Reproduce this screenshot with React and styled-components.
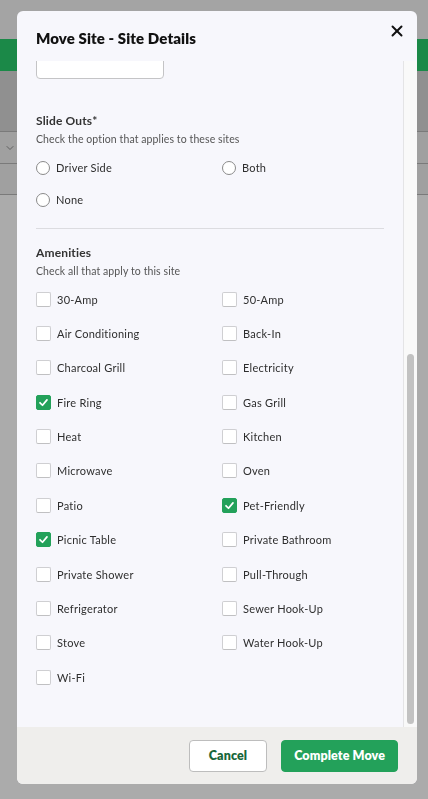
import React, { useLayoutEffect, useRef, useState } from 'react';
import styled, { createGlobalStyle } from 'styled-components';
import { X, ChevronDown } from 'lucide-react';

const GlobalStyle = createGlobalStyle`
  html, body {
    margin: 0;
    padding: 0;
    height: 100%;
    overflow: hidden;
  }
  body {
    font-family: Lato, "Noto Sans", Arial, sans-serif;
    background: #ffffff;
  }
`;

// page behind the modal
const Page = styled.div`
  min-height: 799px;
  background: #fdfdfd;
`;

const TopBar = styled.div`
  height: 39px;
  background: #f2f2f2;
`;

const NavBar = styled.div`
  height: 32px;
  background: #29cb6b;
`;

const Toolbar = styled.div`
  height: 60px;
  background: #d4d4d4;
`;

const TableRow = styled.div`
  height: 32px;
  display: flex;
  align-items: center;
  padding-left: 4px;
  background: #ececec;
  border-top: 1px solid #b4b4b4;
  box-sizing: border-box;
  color: #6e6e6e;

  &:last-child {
    border-bottom: 1px solid #b4b4b4;
  }
`;

const Overlay = styled.div`
  position: fixed;
  inset: 0;
  background: rgba(0, 0, 0, 0.32);
`;

const Modal = styled.div`
  position: fixed;
  top: 11px;
  left: 17px;
  width: 400px;
  height: 773px;
  display: flex;
  flex-direction: column;
  background: #f7f7fc;
  border-radius: 6px;
  overflow: hidden;
`;

const Header = styled.div`
  height: 50px;
  flex-shrink: 0;
  display: flex;
  align-items: center;
  justify-content: space-between;
  padding: 4px 11px 0 19px;
  box-sizing: border-box;
`;

const Title = styled.h2`
  margin: 0;
  font-size: 15px;
  font-weight: 800;
  color: #111;
  letter-spacing: 0.1px;
`;

const CloseButton = styled.button`
  border: none;
  background: none;
  padding: 0;
  margin-top: -15px;
  display: flex;
  color: #111;
  cursor: pointer;
`;

const ScrollArea = styled.div`
  flex: 1;
  min-height: 0;
  display: flex;
`;

const Body = styled.div`
  flex: 1;
  overflow-y: scroll;
  scrollbar-width: none;
  padding: 24px 19px 43px 19px;

  &::-webkit-scrollbar {
    display: none;
  }
`;

const Track = styled.div`
  width: 14px;
  flex-shrink: 0;
  display: flex;
  justify-content: center;
  background: #f9f9f9;
  border-left: 1px solid #e4e4e6;
  padding: 3px 0;
  box-sizing: border-box;
`;

const Thumb = styled.div`
  width: 7px;
  border-radius: 4px;
  background: #c2c2c2;
`;

const Field = styled.div`
  display: flex;
  flex-direction: column;
  gap: 6px;
  margin-bottom: 22px;
`;

const FieldLabel = styled.label`
  font-size: 12px;
  font-weight: 700;
  color: #333;
  letter-spacing: 0.2px;
`;

const TextInput = styled.input`
  width: ${(p) => p.$width || '100%'};
  height: 34px;
  box-sizing: border-box;
  border: 1px solid #c4c4c6;
  border-radius: 4px;
  background: #fff;
  padding: 0 10px;
  font-family: inherit;
  font-size: 12px;
`;

const Section = styled.div`
  margin-top: ${(p) => p.$top || 0}px;
`;

const SectionTitle = styled.div`
  font-size: 12px;
  line-height: 16px;
  font-weight: 700;
  color: #333;
  letter-spacing: 0.15px;
`;

const Help = styled.div`
  margin-top: 3px;
  font-size: 10.5px;
  line-height: 14px;
  color: #555;
  letter-spacing: 0.1px;
`;

const OptionGrid = styled.div`
  display: grid;
  grid-template-columns: 1fr 1fr;
  column-gap: 24px;
  row-gap: ${(p) => p.$gap}px;
  margin-top: 14.5px;
`;

const Option = styled.label`
  display: flex;
  align-items: center;
  gap: 6px;
  height: 14px;
  font-size: 11px;
  color: #2e2e2e;
  letter-spacing: 0.25px;
  white-space: nowrap;
`;

const Radio = styled.span`
  width: 12px;
  height: 12px;
  border: 1px solid #8a8a8a;
  border-radius: 50%;
  background: #fff;
  flex-shrink: 0;
`;

const Box = styled.span`
  width: 13px;
  height: 13px;
  border: 1px solid ${(p) => (p.$checked ? '#23a15a' : '#cfcfd2')};
  border-bottom-color: ${(p) => (p.$checked ? '#23a15a' : '#c0c0c2')};
  border-radius: 2px;
  background: ${(p) => (p.$checked ? '#23a15a' : '#fff')};
  display: flex;
  align-items: center;
  justify-content: center;
  flex-shrink: 0;
`;

const Divider = styled.hr`
  border: none;
  border-top: 1px solid #dcdce0;
  margin: 21px 0 0;
`;

const Footer = styled.div`
  height: 57px;
  flex-shrink: 0;
  display: flex;
  align-items: center;
  justify-content: flex-end;
  gap: 14px;
  padding: 0 19px 0 0;
  background: #efeeec;
`;

const Button = styled.button`
  height: 32px;
  padding: 0 ${(p) => (p.$primary ? 12 : 19)}px;
  border-radius: 4px;
  font-family: inherit;
  font-size: 12.5px;
  font-weight: 800;
  letter-spacing: 0.1px;
  cursor: pointer;
  border: 1px solid ${(p) => (p.$primary ? '#23a15a' : '#bdbdbd')};
  background: ${(p) => (p.$primary ? '#23a15a' : '#fff')};
  color: ${(p) => (p.$primary ? '#fff' : '#17663a')};
`;

const Check = () => (
  <svg width="11" height="11" viewBox="0 0 12 12" fill="none">
    <polyline points="2.2,6.3 4.9,9 9.8,3.2" stroke="#fff" strokeWidth="1.9" strokeLinecap="round" strokeLinejoin="round" />
  </svg>
);

const amenities = [
  ['30-Amp', false], ['50-Amp', false],
  ['Air Conditioning', false], ['Back-In', false],
  ['Charcoal Grill', false], ['Electricity', false],
  ['Fire Ring', true], ['Gas Grill', false],
  ['Heat', false], ['Kitchen', false],
  ['Microwave', false], ['Oven', false],
  ['Patio', false], ['Pet-Friendly', true],
  ['Picnic Table', true], ['Private Bathroom', false],
  ['Private Shower', false], ['Pull-Through', false],
  ['Refrigerator', false], ['Sewer Hook-Up', false],
  ['Stove', false], ['Water Hook-Up', false],
  ['Wi-Fi', false],
];

export default function App() {
  const bodyRef = useRef(null);
  const [thumb, setThumb] = useState({ top: 0, height: 0 });

  useLayoutEffect(() => {
    const el = bodyRef.current;
    if (!el) return;
    // the reference is scrolled to the end of the form
    el.scrollTop = el.scrollHeight;
    const trackH = el.clientHeight - 6;
    setThumb({
      top: (el.scrollTop / el.scrollHeight) * trackH,
      height: (el.clientHeight / el.scrollHeight) * trackH,
    });
  }, []);

  return (
    <>
      <GlobalStyle />
      <Page>
        <TopBar />
        <NavBar />
        <Toolbar />
        <TableRow><ChevronDown size={12} strokeWidth={1.5} /></TableRow>
        <TableRow />
      </Page>
      <Overlay />
      <Modal>
        <Header>
          <Title>Move Site - Site Details</Title>
          <CloseButton aria-label="Close"><X size={18} strokeWidth={2.6} /></CloseButton>
        </Header>
        <ScrollArea>
          <Body ref={bodyRef}>
            <Field>
              <FieldLabel>Site Name*</FieldLabel>
              <TextInput />
            </Field>
            <Field>
              <FieldLabel>Site Type*</FieldLabel>
              <TextInput />
            </Field>
            <Field>
              <FieldLabel>Site Category</FieldLabel>
              <TextInput />
            </Field>
            <Field>
              <FieldLabel>Site Description</FieldLabel>
              <TextInput />
            </Field>
            <Field>
              <FieldLabel>Max Vehicle Length (ft)*</FieldLabel>
              <TextInput $width="128px" />
            </Field>
            <Field>
              <FieldLabel>Max Vehicle Width (ft)*</FieldLabel>
              <TextInput $width="128px" />
            </Field>
            <Field>
              <FieldLabel>Max Occupancy*</FieldLabel>
              <TextInput $width="128px" />
            </Field>

            <Section $top={34}>
              <SectionTitle>Slide Outs*</SectionTitle>
              <Help>Check the option that applies to these sites</Help>
              <OptionGrid $gap={18}>
                <Option><Radio />Driver Side</Option>
                <Option><Radio />Both</Option>
                <Option><Radio />None</Option>
              </OptionGrid>
            </Section>

            <Divider />

            <Section $top={16}>
              <SectionTitle>Amenities</SectionTitle>
              <Help>Check all that apply to this site</Help>
              <OptionGrid $gap={20.4}>
                {amenities.map(([name, checked]) => (
                  <Option key={name}>
                    <Box $checked={checked}>{checked && <Check />}</Box>
                    {name}
                  </Option>
                ))}
              </OptionGrid>
            </Section>
          </Body>
          <Track>
            <Thumb style={{ marginTop: thumb.top, height: thumb.height }} />
          </Track>
        </ScrollArea>
        <Footer>
          <Button>Cancel</Button>
          <Button $primary>Complete Move</Button>
        </Footer>
      </Modal>
    </>
  );
}
